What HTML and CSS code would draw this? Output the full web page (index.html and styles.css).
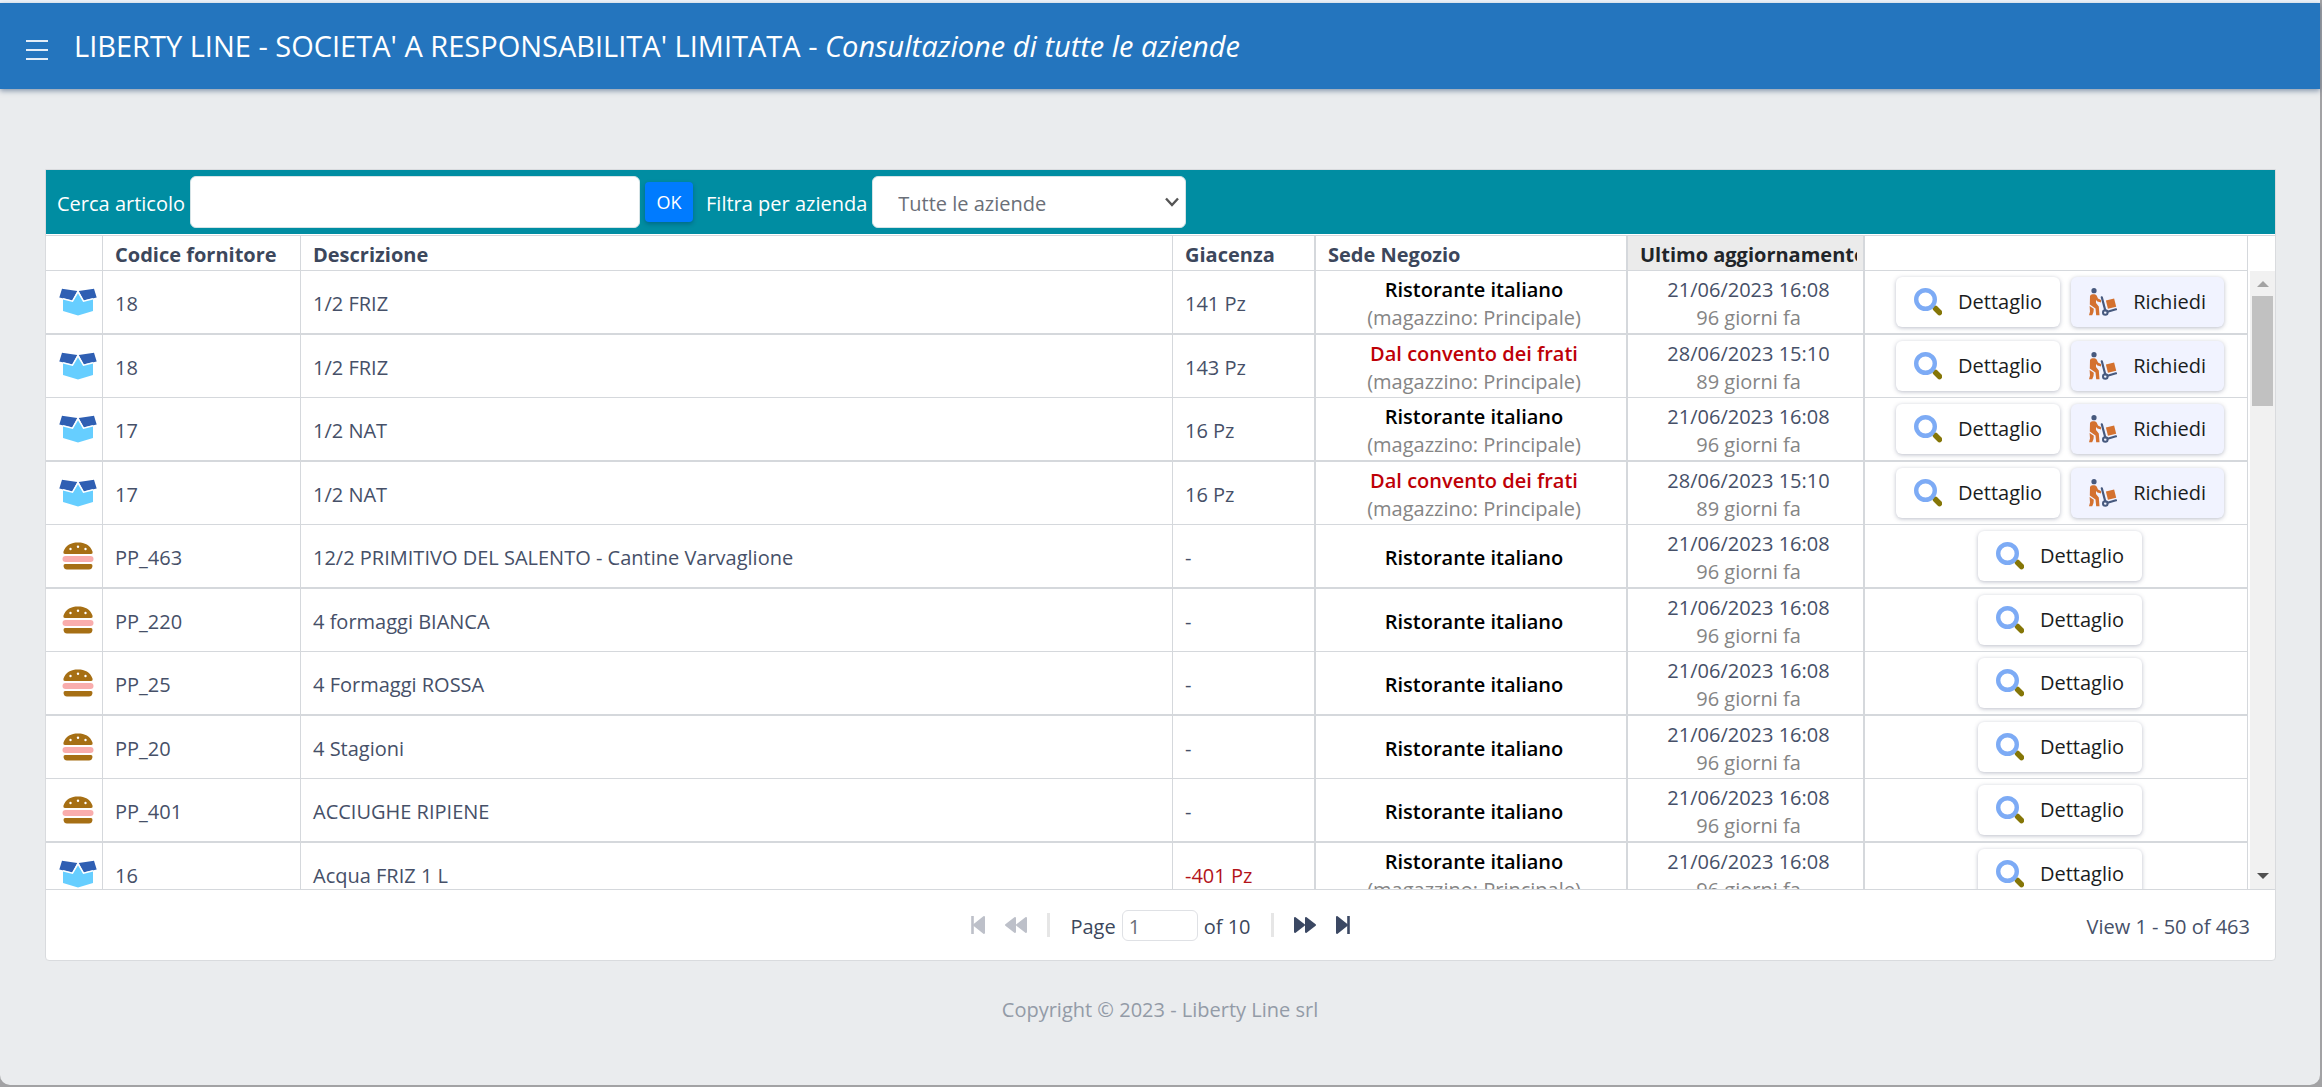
FILE: index.html
```html
<!DOCTYPE html>
<html lang="it">
<head>
<meta charset="utf-8">
<title>Liberty Line - Consultazione di tutte le aziende</title>
<link rel="stylesheet" href="styles.css">
</head>
<body>
<svg class="sprite" aria-hidden="true">
  <symbol id="i-box" viewBox="0 0 38 28">
    <path fill="#66ceff" d="M4 10 11.500 12.500 14.500 11 19 3.500 23.500 11 27 12.500 34 10V23L19 27.500 4 23Z"/>
    <path fill="#2f5fb3" d="M3 .8 18.300 3 13.300 12.500 .3 9.500Z M35 .8 19.700 3 24.700 12.500 37.700 9.500Z"/>
    <path fill="none" stroke="#fff" stroke-width="1.500" d="M4 10.800 13.500 13.200 19 3.800 24.500 13.200 34 10.800"/>
  </symbol>
  <symbol id="i-burger" viewBox="0 0 32 28">
    <path fill="#a66f14" d="M3 12Q1 12 1.500 9.500C4 3 9 .5 16 .5S28 3 30.500 9.500Q31 12 29 12Z M3 22H29Q30.500 22 30.500 24 30 27.500 27 27.500H5Q2 27.500 1.500 24 1.500 22 3 22Z"/>
    <rect x="0.500" y="14" width="31" height="6" rx="3" fill="#f9adad"/>
    <g fill="#fff"><circle cx="8.500" cy="7" r="1.200"/><circle cx="16" cy="4.800" r="1.200"/><circle cx="23.500" cy="7" r="1.200"/></g>
  </symbol>
  <symbol id="i-search" viewBox="0 0 28 28">
    <path stroke="#857607" stroke-width="5.500" stroke-linecap="round" d="M21.500 20.500 25.500 24.500"/>
    <circle cx="11.500" cy="11.500" r="9.300" fill="none" stroke="#7dabf5" stroke-width="4.400"/>
  </symbol>
  <symbol id="i-dolly" viewBox="0 0 28 28">
    <circle cx="5" cy="2.700" r="2.600" fill="#47597e"/>
    <path fill="#d4712f" d="M1 8Q1.500 6.200 3.500 6.200H5.500Q7 6.200 7.800 7.800L9 10.500 12 12V14.500L8.500 13.500 7 12V15L9.800 18.500 10.500 27.300H7.200L6.500 20.500 .8 16.500Z M.6 18 4.800 20.800 4.500 24 3.200 27.300H0L1 23.500Z"/>
    <rect x="17.800" y="11.300" width="8.500" height="8.500" transform="rotate(-14 22 15.500)" fill="#d4712f"/>
    <path fill="none" stroke="#47597e" stroke-width="2.200" stroke-linecap="round" d="M12.800 9.300 16.300 22.500M18.500 23.800 27 21.300"/>
    <circle cx="16.300" cy="24.500" r="2.300" fill="none" stroke="#47597e" stroke-width="2"/>
  </symbol>
  <symbol id="i-end" viewBox="0 0 14 20">
    <path stroke="currentColor" fill="currentColor" stroke-width="2" stroke-linejoin="round" d="M1 2 11 10 1 18Z"/>
    <path stroke="currentColor" stroke-width="2.600" d="M12.500 1V19"/>
  </symbol>
  <symbol id="i-fast" viewBox="0 0 22 20">
    <path stroke="currentColor" fill="currentColor" stroke-width="2" stroke-linejoin="round" d="M1 3 10 10 1 17ZM12 3 21 10 12 17Z"/>
  </symbol>
</svg>

<div class="window">
  <header class="topbar">
    <button class="menu" aria-label="Menu"><span></span><span></span><span></span></button>
    <h1>LIBERTY LINE - SOCIETA' A RESPONSABILITA' LIMITATA - <em>Consultazione di tutte le aziende</em></h1>
  </header>

  <main class="panel">
    <form class="toolbar">
      <label for="cerca">Cerca articolo</label>
      <input id="cerca" class="field" type="text">
      <button class="ok" type="button">OK</button>
      <label for="azienda">Filtra per azienda</label>
      <span class="select">
        <select id="azienda" class="field"><option>Tutte le aziende</option></select>
        <svg width="14" height="10" viewBox="0 0 14 10"><path d="M1 1.500 7 8 13 1.500" fill="none" stroke="#555" stroke-width="2.400"/></svg>
      </span>
    </form>

    <div class="grid">
      <div class="rows">
        <table>
          <colgroup><col class="c-icon"><col class="c-code"><col><col class="c-qty"><col class="c-shop"><col class="c-date"><col class="c-act"></colgroup>
          <thead>
            <tr><th></th><th>Codice fornitore</th><th>Descrizione</th><th class="w2">Giacenza</th><th class="w2">Sede Negozio</th><th class="w2 sorted"><span>Ultimo aggiornamento</span></th><th></th></tr>
          </thead>
          <tbody>
            <tr><td class="icon"><svg class="box"><use href="#i-box"/></svg></td><td>18</td><td>1/2 FRIZ</td><td class="w2">141 Pz</td><td class="w2 mid"><b>Ristorante italiano</b><small>(magazzino: Principale)</small></td><td class="w2 mid">21/06/2023 16:08<small>96 giorni fa</small></td><td class="act"><div><button><svg><use href="#i-search"/></svg>Dettaglio</button><button class="ask"><svg><use href="#i-dolly"/></svg>Richiedi</button></div></td></tr>
            <tr><td class="icon"><svg class="box"><use href="#i-box"/></svg></td><td>18</td><td>1/2 FRIZ</td><td class="w2">143 Pz</td><td class="w2 mid"><b class="other">Dal convento dei frati</b><small>(magazzino: Principale)</small></td><td class="w2 mid">28/06/2023 15:10<small>89 giorni fa</small></td><td class="act"><div><button><svg><use href="#i-search"/></svg>Dettaglio</button><button class="ask"><svg><use href="#i-dolly"/></svg>Richiedi</button></div></td></tr>
            <tr><td class="icon"><svg class="box"><use href="#i-box"/></svg></td><td>17</td><td>1/2 NAT</td><td class="w2">16 Pz</td><td class="w2 mid"><b>Ristorante italiano</b><small>(magazzino: Principale)</small></td><td class="w2 mid">21/06/2023 16:08<small>96 giorni fa</small></td><td class="act"><div><button><svg><use href="#i-search"/></svg>Dettaglio</button><button class="ask"><svg><use href="#i-dolly"/></svg>Richiedi</button></div></td></tr>
            <tr><td class="icon"><svg class="box"><use href="#i-box"/></svg></td><td>17</td><td>1/2 NAT</td><td class="w2">16 Pz</td><td class="w2 mid"><b class="other">Dal convento dei frati</b><small>(magazzino: Principale)</small></td><td class="w2 mid">28/06/2023 15:10<small>89 giorni fa</small></td><td class="act"><div><button><svg><use href="#i-search"/></svg>Dettaglio</button><button class="ask"><svg><use href="#i-dolly"/></svg>Richiedi</button></div></td></tr>
            <tr><td class="icon"><svg class="burger"><use href="#i-burger"/></svg></td><td>PP_463</td><td>12/2 PRIMITIVO DEL SALENTO - Cantine Varvaglione</td><td class="w2">-</td><td class="w2 mid"><b>Ristorante italiano</b></td><td class="w2 mid">21/06/2023 16:08<small>96 giorni fa</small></td><td class="act"><div><button><svg><use href="#i-search"/></svg>Dettaglio</button></div></td></tr>
            <tr><td class="icon"><svg class="burger"><use href="#i-burger"/></svg></td><td>PP_220</td><td>4 formaggi BIANCA</td><td class="w2">-</td><td class="w2 mid"><b>Ristorante italiano</b></td><td class="w2 mid">21/06/2023 16:08<small>96 giorni fa</small></td><td class="act"><div><button><svg><use href="#i-search"/></svg>Dettaglio</button></div></td></tr>
            <tr><td class="icon"><svg class="burger"><use href="#i-burger"/></svg></td><td>PP_25</td><td>4 Formaggi ROSSA</td><td class="w2">-</td><td class="w2 mid"><b>Ristorante italiano</b></td><td class="w2 mid">21/06/2023 16:08<small>96 giorni fa</small></td><td class="act"><div><button><svg><use href="#i-search"/></svg>Dettaglio</button></div></td></tr>
            <tr><td class="icon"><svg class="burger"><use href="#i-burger"/></svg></td><td>PP_20</td><td>4 Stagioni</td><td class="w2">-</td><td class="w2 mid"><b>Ristorante italiano</b></td><td class="w2 mid">21/06/2023 16:08<small>96 giorni fa</small></td><td class="act"><div><button><svg><use href="#i-search"/></svg>Dettaglio</button></div></td></tr>
            <tr><td class="icon"><svg class="burger"><use href="#i-burger"/></svg></td><td>PP_401</td><td>ACCIUGHE RIPIENE</td><td class="w2">-</td><td class="w2 mid"><b>Ristorante italiano</b></td><td class="w2 mid">21/06/2023 16:08<small>96 giorni fa</small></td><td class="act"><div><button><svg><use href="#i-search"/></svg>Dettaglio</button></div></td></tr>
            <tr><td class="icon"><svg class="box"><use href="#i-box"/></svg></td><td>16</td><td>Acqua FRIZ 1 L</td><td class="w2 neg">-401 Pz</td><td class="w2 mid"><b>Ristorante italiano</b><small>(magazzino: Principale)</small></td><td class="w2 mid">21/06/2023 16:08<small>96 giorni fa</small></td><td class="act"><div><button><svg><use href="#i-search"/></svg>Dettaglio</button></div></td></tr>
          </tbody>
        </table>
      </div>
      <div class="scrollbar" aria-hidden="true">
        <svg width="12" height="6"><path d="M0 6 6 0 12 6Z" fill="#a3a3a3"/></svg>
        <span class="thumb"></span>
        <svg width="12" height="6"><path d="M0 0 6 6 12 0Z" fill="#505050"/></svg>
      </div>
    </div>

    <nav class="pager">
      <div class="pages">
        <button class="off" aria-label="Prima pagina"><svg class="flip" width="14" height="20"><use href="#i-end"/></svg></button>
        <button class="off" aria-label="Pagina precedente"><svg class="flip" width="22" height="20"><use href="#i-fast"/></svg></button>
        <i class="sep"></i>
        <span class="where"><label for="pagina">Page</label><input id="pagina" type="text" value="1"><span>of 10</span></span>
        <i class="sep"></i>
        <button aria-label="Pagina successiva"><svg width="22" height="20"><use href="#i-fast"/></svg></button>
        <button aria-label="Ultima pagina"><svg width="14" height="20"><use href="#i-end"/></svg></button>
      </div>
      <span class="view">View 1 - 50 of 463</span>
    </nav>
  </main>

  <footer>Copyright © 2023 - Liberty Line srl</footer>
</div>
</body>
</html>
```
FILE: styles.css
```css
* { box-sizing: border-box; }

body {
  margin: 0;
  background: #a2a2a4;
  color: #465068;
  font: 20px/28px "Open Sans", "Noto Sans", sans-serif;
}

button, input, select { font: inherit; color: inherit; margin: 0; }
button { border: 0; padding: 0; background: none; cursor: pointer; }
svg { display: block; }
.sprite { position: absolute; width: 0; height: 0; }

.window {
  min-height: calc(100vh - 2px);
  margin-right: 2px;
  border-top: 3px solid #eef3fa;
  background: #eaecee;
  border-radius: 0 0 10px 10px;
}

/* top bar */
.topbar {
  display: flex;
  align-items: center;
  gap: 26px;
  height: 86px;
  padding: 0 26px;
  background: #2475be;
  box-shadow: 0 2px 5px rgba(40, 70, 110, .5);
  color: #fff;
}
.topbar h1 { margin: 0; font-size: 29px; line-height: 40px; font-weight: 400; }
.menu { display: grid; gap: 7px; width: 22px; padding-top: 8px; }
.menu span { height: 2px; background: #e4eef8; }

/* panel */
.panel {
  margin: 80px 44px 0 45px;
  border: 1px solid #d9dbde;
  border-radius: 0 0 4px 4px;
  background: #fff;
}
.toolbar {
  display: flex;
  align-items: center;
  gap: 5px;
  height: 64px;
  padding: 0 11px;
  background: #008da2;
  color: #fff;
}
.toolbar label { padding-top: 3px; }
.field {
  height: 52px;
  border: 1px solid #d5e3e6;
  border-radius: 6px;
  background: #fff;
  color: #6a6f78;
}
input.field { width: 450px; padding: 0 12px; }
.ok {
  width: 48px;
  height: 40px;
  margin-right: 8px;
  border-radius: 4px;
  background: #007bff;
  box-shadow: 0 2px 4px rgba(0, 40, 80, .35);
  font-size: 18px;
}
.select { display: grid; align-items: center; }
.select > * { grid-area: 1 / 1; }
.select select { width: 314px; padding: 3px 25px 0; appearance: none; }
.select svg { justify-self: end; margin-right: 7px; pointer-events: none; }

/* data grid */
.grid {
  display: flex;
  margin-top: 1px;
  border-bottom: 1px solid #d5d8dc;
  border-top: 1px solid #d5d8dc;
}
.rows { flex: 1; height: 653px; overflow: hidden; }
table { width: 100%; table-layout: fixed; border-collapse: separate; border-spacing: 0; }
.c-icon { width: 57px; }
.c-code { width: 198px; }
.c-qty { width: 143px; }
.c-shop { width: 312px; }
.c-date { width: 237px; }
.c-act { width: 383px; }

th, td { border: 0 solid #d5d8dc; border-width: 0 1px 1px 0; padding: 3px 12px 0; text-align: left; }
.w2 { border-right-width: 2px; }
th { height: 35px; color: #3c475c; font-weight: 700; white-space: nowrap; }
.sorted { background: #ebebeb; color: #212529; padding: 3px 6px 0 12px; }
.sorted span { display: block; overflow: hidden; }
td { height: 63px; }
tbody tr:nth-child(odd) td { height: 64px; border-bottom-width: 2px; }
.mid { padding: 3px 6px 0 12px; text-align: center; }
.mid b { display: block; color: #000; font-weight: 600; }
.mid b.other { color: #be0006; }
.mid small { display: block; color: #858585; font-size: inherit; }
.neg { color: #b3131a; }
.icon { padding: 0 0 0 13px; }
.box { width: 38px; height: 28px; }
.burger { width: 32px; height: 28px; margin-left: 3px; }

.act { padding: 0 0 0 8px; }
.act div { display: flex; justify-content: center; gap: 11px; }
.act button {
  display: flex;
  align-items: center;
  gap: 16px;
  height: 50px;
  padding: 0 18px;
  border-radius: 6px;
  box-shadow: 0 1px 4px rgba(60, 70, 100, .35);
  color: #1a1c20;
}
.act .ask { background: #f1f3ff; }
.act svg { width: 28px; height: 28px; }

.scrollbar {
  display: flex;
  flex-direction: column;
  align-items: center;
  width: 25px;
  margin: 35px 0 0 2px;
  padding: 10px 0;
  background: #f1f1f1;
}
.thumb { width: 21px; height: 110px; margin: 9px 0 auto; background: #c1c1c1; }

/* pager */
.pager {
  display: grid;
  grid-template-columns: 1fr auto 1fr;
  align-items: center;
  height: 70px;
  padding: 0 25px;
}
.pages { grid-column: 2; display: flex; align-items: center; gap: 20px; color: #3b4863; }
.pages .off { color: #bdc0c9; }
.flip { transform: scaleX(-1); }
.sep { width: 3px; height: 24px; background: #e6e6e6; }
.where { display: flex; align-items: center; gap: 6px; color: #3c475c; }
.where label, .where span, .view { padding-top: 3px; }
.where input {
  width: 76px;
  height: 31px;
  padding: 2px 6px 0;
  border: 1px solid #dfe1e5;
  border-radius: 6px;
  color: #6a6f78;
}
.view { text-align: right; }

footer { margin-top: 35px; padding-bottom: 60px; text-align: center; color: #939ba7; }
```
